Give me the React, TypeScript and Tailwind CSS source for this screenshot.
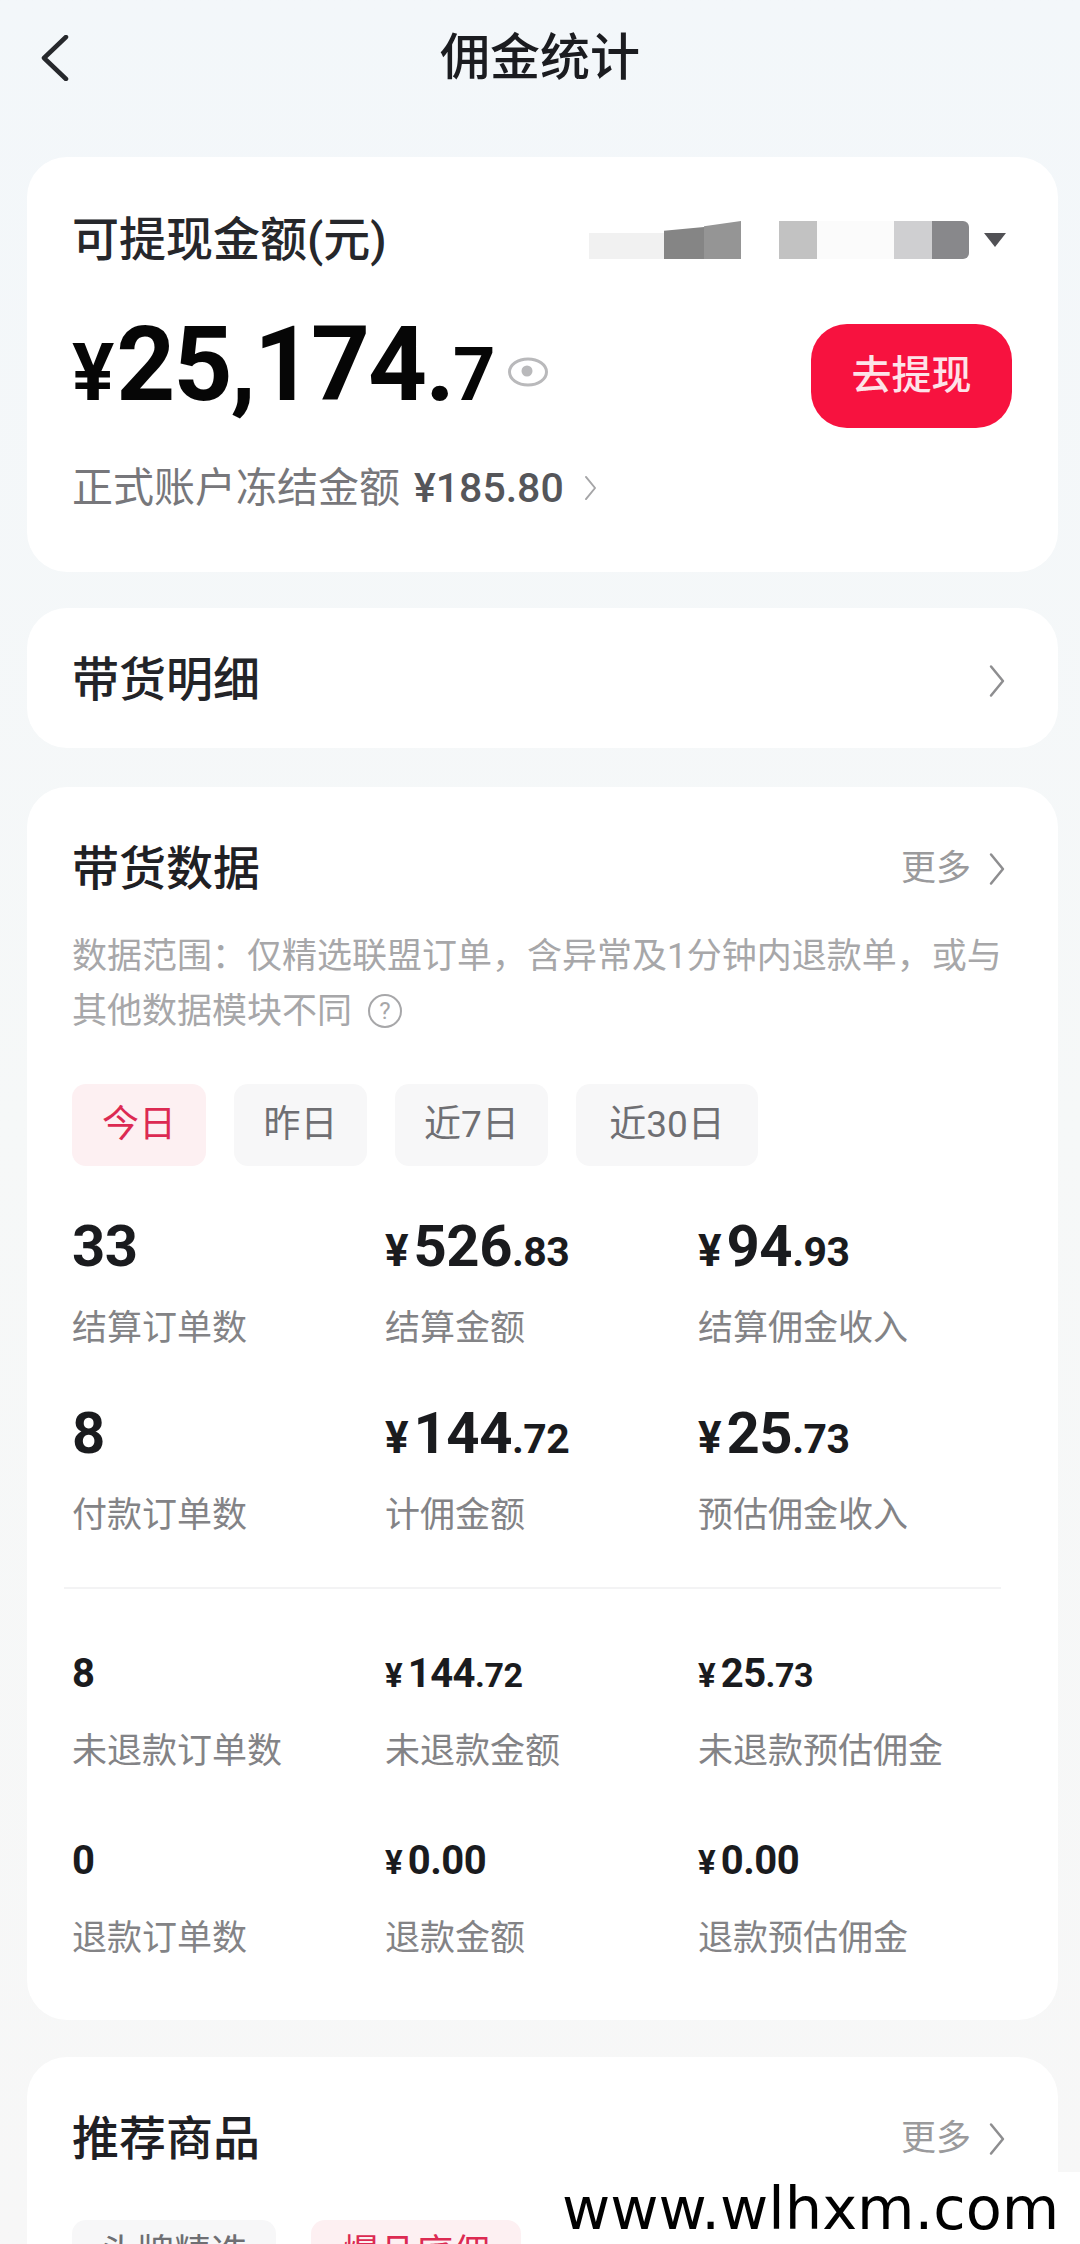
const cjk = "font-['Roboto','Noto_Sans_CJK_SC','Noto_Sans_CJK_JP',sans-serif]";

function Chevron({ className }: { className: string }) {
  return (
    <svg viewBox="0 0 20 40" fill="none" className={className}>
      <path d="M3 3 L17 20 L3 37" stroke="currentColor" strokeWidth="3" strokeLinecap="round" strokeLinejoin="round" />
    </svg>
  );
}

function More() {
  return (
    <div className="flex items-center gap-[17px] text-[#9a9a9c]">
      <span className="text-[35px] leading-[48px]">更多</span>
      <Chevron className="w-[18px] h-[34px] text-[#8e8e90]" />
    </div>
  );
}

function Money({ y, big, dec, size }: { y?: boolean; big: string; dec?: string; size: "lg" | "sm" }) {
  const lg = size === "lg";
  return (
    <div className={`flex items-baseline font-bold text-[#1a1b1e] ${lg ? "h-[58px] leading-[58px]" : "h-[42px] leading-[42px]"}`}>
      {y && <span className={lg ? "text-[44px] mr-[5px]" : "text-[33px] mr-[5px]"}>¥</span>}
      <span className={lg ? "text-[58px] tracking-[-0.5px]" : "text-[40px] tracking-[-0.5px]"}>{big}</span>
      {dec && <span className={lg ? "text-[41px] tracking-[-0.5px]" : "text-[34px] tracking-[-0.5px]"}>{dec}</span>}
    </div>
  );
}

function Stat({ big, dec, y, label, size }: { big: string; dec?: string; y?: boolean; label: string; size: "lg" | "sm" }) {
  return (
    <div className="flex flex-col">
      <Money y={y} big={big} dec={dec} size={size} />
      <div className={`text-[35px] leading-[48px] text-[#838386] ${size === "lg" ? "mt-[30px]" : "mt-[33px]"}`}>{label}</div>
    </div>
  );
}

function Tab({ text, active, w }: { text: string; active?: boolean; w: string }) {
  return (
    <div className={`h-[82px] rounded-[14px] flex items-center justify-center text-[37px] ${w} ${active ? "bg-[#fdf0f2] text-[#dc2a52]" : "bg-[#f7f7f8] text-[#6f6f73]"}`}>
      {text}
    </div>
  );
}

export default function App() {
  return (
    <div className={`relative h-[2244px] w-[1080px] overflow-hidden bg-gradient-to-b from-[#f3f7fa] via-[#f6f8f8] to-[#f7f7f7] ${cjk}`}>
      <header className="relative flex h-[157px] items-start justify-center">
        <svg viewBox="0 0 28 46" fill="none" className="absolute left-[41px] top-[35px] h-[46px] w-[28px] text-[#26282c]">
          <path d="M25 2 L3 23 L25 44" stroke="currentColor" strokeWidth="4.5" strokeLinecap="round" strokeLinejoin="round" />
        </svg>
        <h1 className="mt-[27px] text-[50px] leading-[62px] font-medium text-[#1b1c20]">佣金统计</h1>
      </header>

      <main className="flex flex-col pl-[27px] pr-[22px]">
        <section className="h-[415px] rounded-[40px] bg-white pl-[45px] pr-[46px] pt-[51px]">
          <div className="flex items-center justify-between">
            <div className="text-[47px] leading-[64px] font-medium text-[#26272b]">可提现金额(元)</div>
            <div className="mr-[6px] flex items-center">
              <div className="flex h-[38px] items-end">
                <div className="h-[26px] w-[75px] bg-[#f1f1f1]" />
                <div className="h-[32px] w-[40px] bg-[#858585] [clip-path:polygon(0_12%,100%_0,100%_100%,0_100%)]" />
                <div className="h-[38px] w-[37px] bg-[#959595] [clip-path:polygon(0_14%,100%_0,100%_100%,0_100%)]" />
                <div className="ml-[38px] h-[38px] w-[38px] bg-[#c2c2c2]" />
                <div className="h-[38px] w-[77px] bg-[#fbfbfb]" />
                <div className="h-[38px] w-[38px] bg-[#cfcfd1]" />
                <div className="h-[38px] w-[37px] rounded-r-[6px] bg-[#88888b]" />
              </div>
              <svg viewBox="0 0 22 14" className="ml-[15px] h-[14px] w-[22px] text-[#515155]">
                <path d="M0 0 H22 L11 14 Z" fill="currentColor" />
              </svg>
            </div>
          </div>
          <div className="mt-[38px] flex items-center justify-between">
            <div className="flex items-center">
              <div className="flex items-baseline font-bold leading-[110px] text-[#060606]">
                <span className="text-[79px] mr-[2px]">¥</span>
                <span className="text-[103px] tracking-[-2px]">25,174.</span>
                <span className="text-[74px]">7</span>
              </div>
              <svg viewBox="0 0 40 30" fill="none" className="ml-[12px] mt-[4px] h-[30px] w-[40px] text-[#b9b9bb]">
                <ellipse cx="20" cy="15" rx="18.5" ry="13" stroke="currentColor" strokeWidth="3" />
                <circle cx="19" cy="14" r="5.5" fill="currentColor" />
              </svg>
            </div>
            <button className="mt-[11px] flex h-[104px] w-[201px] items-center justify-center rounded-[36px] bg-[#f7123f] text-[40px] font-medium text-[#fde3e8]">
              去提现
            </button>
          </div>
          <div className="mt-[30px] flex items-center text-[#77777b]">
            <span className="text-[41px] leading-[56px]">正式账户冻结金额</span>
            <span className="ml-[14px] text-[41px] font-medium leading-[56px] text-[#55565a]">¥185.80</span>
            <Chevron className="ml-[20px] h-[26px] w-[13px] text-[#a5a5a7]" />
          </div>
        </section>

        <section className="mt-[36px] flex h-[140px] items-center justify-between rounded-[40px] bg-white pl-[45px] pr-[52px] pt-[5px]">
          <div className="text-[47px] font-medium text-[#232428]">带货明细</div>
          <Chevron className="h-[34px] w-[18px] text-[#8e8e90]" />
        </section>

        <section className="mt-[39px] h-[1233px] rounded-[40px] bg-white pl-[45px] pr-[46px] pt-[50px]">
          <div className="flex items-center justify-between pr-[6px]">
            <div className="text-[47px] leading-[64px] font-medium text-[#1f2024]">带货数据</div>
            <More />
          </div>
          <p className="mt-[28px] whitespace-nowrap text-[35px] leading-[55px] text-[#a7a7a9]">
            {"数据范围\uFF1A仅精选联盟订单\uFF0C含异常及1分钟内退款单\uFF0C或与"}
            <br />
            其他数据模块不同
            <span className="relative ml-[16px] inline-flex h-[34px] w-[34px] translate-y-[-4px] items-center justify-center rounded-full border-[2.5px] border-[#a7a7a9] text-[24px] leading-none">?</span>
          </p>
          <div className="mt-[45px] flex gap-[28px]">
            <Tab text="今日" active w="w-[134px]" />
            <Tab text="昨日" w="w-[133px]" />
            <Tab text="近7日" w="w-[153px]" />
            <Tab text="近30日" w="w-[182px]" />
          </div>
          <div className="mt-[51px] grid grid-cols-[313px_313px_1fr] gap-y-[51px]">
            <Stat size="lg" big="33" label="结算订单数" />
            <Stat size="lg" y big="526" dec=".83" label="结算金额" />
            <Stat size="lg" y big="94" dec=".93" label="结算佣金收入" />
            <Stat size="lg" big="8" label="付款订单数" />
            <Stat size="lg" y big="144" dec=".72" label="计佣金额" />
            <Stat size="lg" y big="25" dec=".73" label="预估佣金收入" />
          </div>
          <div className="mt-[47px] -ml-[8px] h-[2px] w-[937px] bg-[#f3f3f4]" />
          <div className="mt-[64px] grid grid-cols-[313px_313px_1fr] gap-y-[64px]">
            <Stat size="sm" big="8" label="未退款订单数" />
            <Stat size="sm" y big="144" dec=".72" label="未退款金额" />
            <Stat size="sm" y big="25" dec=".73" label="未退款预估佣金" />
            <Stat size="sm" big="0" label="退款订单数" />
            <Stat size="sm" y big="0.00" label="退款金额" />
            <Stat size="sm" y big="0.00" label="退款预估佣金" />
          </div>
        </section>

        <section className="mt-[37px] h-[300px] rounded-[40px] bg-white pl-[45px] pr-[46px] pt-[50px]">
          <div className="flex items-center justify-between pr-[6px]">
            <div className="text-[47px] leading-[64px] font-medium text-[#1f2024]">推荐商品</div>
            <More />
          </div>
          <div className="mt-[49px] flex gap-[35px]">
            <div className="flex h-[82px] w-[204px] items-start justify-center rounded-[14px] bg-[#f7f7f8] pt-[10px] text-[37px] leading-[48px] text-[#6f6f73]">头牌精选</div>
            <div className="flex h-[82px] w-[210px] items-start justify-center rounded-[14px] bg-[#fdf0f2] pt-[10px] text-[37px] leading-[48px] text-[#dc2a52]">爆品底佣</div>
          </div>
        </section>
      </main>

      <div className="absolute left-[544px] top-[2172px] flex h-[72px] w-[536px] items-center justify-start bg-white pl-[18px] font-['DejaVu_Sans',sans-serif] text-[59px] leading-none text-black">
        www.wlhxm.com
      </div>
    </div>
  );
}
